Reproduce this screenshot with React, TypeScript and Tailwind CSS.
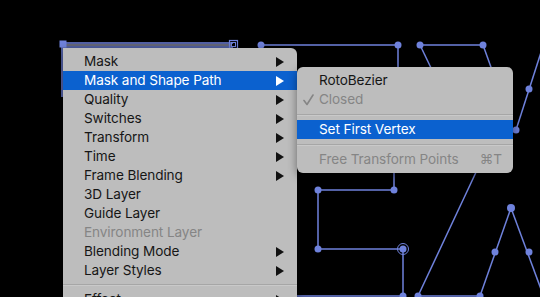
import React from "react";

const C = "#6f82dc";

function Arrow({ white }: { white?: boolean }) {
  return (
    <svg width="8" height="10" viewBox="0 0 8 10" className="shrink-0">
      <polygon points="0,0 8,5 0,10" fill={white ? "#ffffff" : "#111111"} />
    </svg>
  );
}

type Item = { label: string; arrow?: boolean; disabled?: boolean; active?: boolean };

const mainItems: Item[] = [
  { label: "Mask", arrow: true },
  { label: "Mask and Shape Path", arrow: true, active: true },
  { label: "Quality", arrow: true },
  { label: "Switches", arrow: true },
  { label: "Transform", arrow: true },
  { label: "Time", arrow: true },
  { label: "Frame Blending", arrow: true },
  { label: "3D Layer" },
  { label: "Guide Layer" },
  { label: "Environment Layer", disabled: true },
  { label: "Blending Mode", arrow: true },
  { label: "Layer Styles", arrow: true },
];

function Canvas() {
  const dot = (x: number, y: number, r = 3.5) => <circle cx={x} cy={y} r={r} fill={C} />;
  return (
    <svg className="absolute inset-0" width="540" height="297" viewBox="0 0 540 297">
      <g stroke={C} strokeWidth="1.5" fill="none">
        <line x1="63" y1="43" x2="233" y2="43" />
        <line x1="63" y1="47" x2="233" y2="47" />
        <line x1="62" y1="44" x2="62" y2="97" />
        <line x1="261" y1="45" x2="398" y2="45" />
        <line x1="398" y1="45" x2="398" y2="70" />
        <line x1="420" y1="45" x2="483" y2="45" />
        <line x1="420" y1="45" x2="432" y2="70" />
        <line x1="483" y1="45" x2="492" y2="70" />
        <line x1="545" y1="40" x2="516" y2="130" />
        <line x1="394" y1="170" x2="394" y2="190" />
        <line x1="318" y1="190" x2="394" y2="190" />
        <line x1="318" y1="190" x2="318" y2="249" />
        <line x1="318" y1="249" x2="403" y2="249" />
        <line x1="403" y1="249" x2="403" y2="300" />
        <line x1="297" y1="296" x2="403" y2="296" />
        <line x1="478" y1="168" x2="418" y2="296" />
        <line x1="418" y1="296" x2="480" y2="296" />
        <line x1="480" y1="296" x2="511" y2="208" />
        <line x1="511" y1="208" x2="545" y2="300" />
      </g>
      <line x1="66" y1="45" x2="231" y2="45" stroke="#c9d0f2" strokeWidth="1.2" />
      <rect x="59.5" y="40.5" width="7" height="7" fill={C} />
      <rect x="229.5" y="40.5" width="8" height="8" fill="none" stroke={C} strokeWidth="1.2" />
      <rect x="231.5" y="42.5" width="4" height="4" fill="none" stroke={C} strokeWidth="1" />
      {dot(261, 45)}
      {dot(398, 45)}
      {dot(420, 45)}
      {dot(483, 45)}
      {dot(529, 89)}
      {dot(516, 130)}
      {dot(318, 190)}
      {dot(394, 190)}
      {dot(318, 249)}
      {dot(403, 249)}
      <circle cx="403" cy="249" r="5.5" fill="none" stroke={C} strokeWidth="1" />
      {dot(403, 296)}
      {dot(418, 296)}
      {dot(480, 296)}
      {dot(511, 208, 4)}
      {dot(495, 252)}
      {dot(529, 252)}
    </svg>
  );
}

function Sep({ h }: { h: string }) {
  return (
    <div className={`${h} flex flex-col justify-center`}>
      <div className="h-[1px] bg-[#a6a6a6]" />
      <div className="h-[1px] bg-[#c9c9c9]" />
    </div>
  );
}

export default function App() {
  const font = { fontFamily: "Inter, 'Noto Sans', 'Liberation Sans', sans-serif" };
  return (
    <div className="relative w-[540px] h-[297px] bg-black overflow-hidden" style={font}>
      <Canvas />
      <div className="absolute left-[63px] top-[48px] w-[234px] bg-[#bdbdbd] rounded-tr-[6px] pt-[4px] shadow-[0_2px_8px_rgba(0,0,0,0.4)] text-[13.6px] tracking-[-0.1px] leading-none text-[#161616]">
        {mainItems.map((it) => (
          <div
            key={it.label}
            className={`h-[19px] flex items-center justify-between pl-[21px] pr-[13px] ${
              it.active ? "bg-[#0b61cf] text-white" : ""
            } ${it.disabled ? "text-[#858585]" : ""}`}
          >
            <span>{it.label}</span>
            {it.arrow && <Arrow white={it.active} />}
          </div>
        ))}
        <Sep h="h-[10px]" />
        <div className="h-[19px] flex items-center justify-between pl-[21px] pr-[13px]">
          <span>Effect</span>
          <Arrow />
        </div>
      </div>
      <div className="absolute left-[297px] top-[67px] w-[216px] bg-[#bdbdbd] rounded-[6px] py-[4px] shadow-[0_3px_10px_rgba(0,0,0,0.45)] text-[13.6px] tracking-[-0.1px] leading-none text-[#161616]">
        <div className="h-[19px] flex items-center pl-[22px]">RotoBezier</div>
        <div className="h-[19px] flex items-center pl-[6px] text-[#858585]">
          <svg width="16" height="12" viewBox="0 0 16 12" className="shrink-0">
            <polyline points="1,6.5 4,10.5 10,1" fill="none" stroke="#858585" strokeWidth="1.6" strokeLinecap="round" strokeLinejoin="round" />
          </svg>
          <span>Closed</span>
        </div>
        <Sep h="h-[11px]" />
        <div className="h-[19px] flex items-center pl-[22px] bg-[#0b61cf] text-white">Set First Vertex</div>
        <Sep h="h-[11px]" />
        <div className="h-[19px] flex items-center justify-between pl-[22px] pr-[11px] text-[#858585]">
          <span>Free Transform Points</span>
          <span>⌘T</span>
        </div>
      </div>
    </div>
  );
}
